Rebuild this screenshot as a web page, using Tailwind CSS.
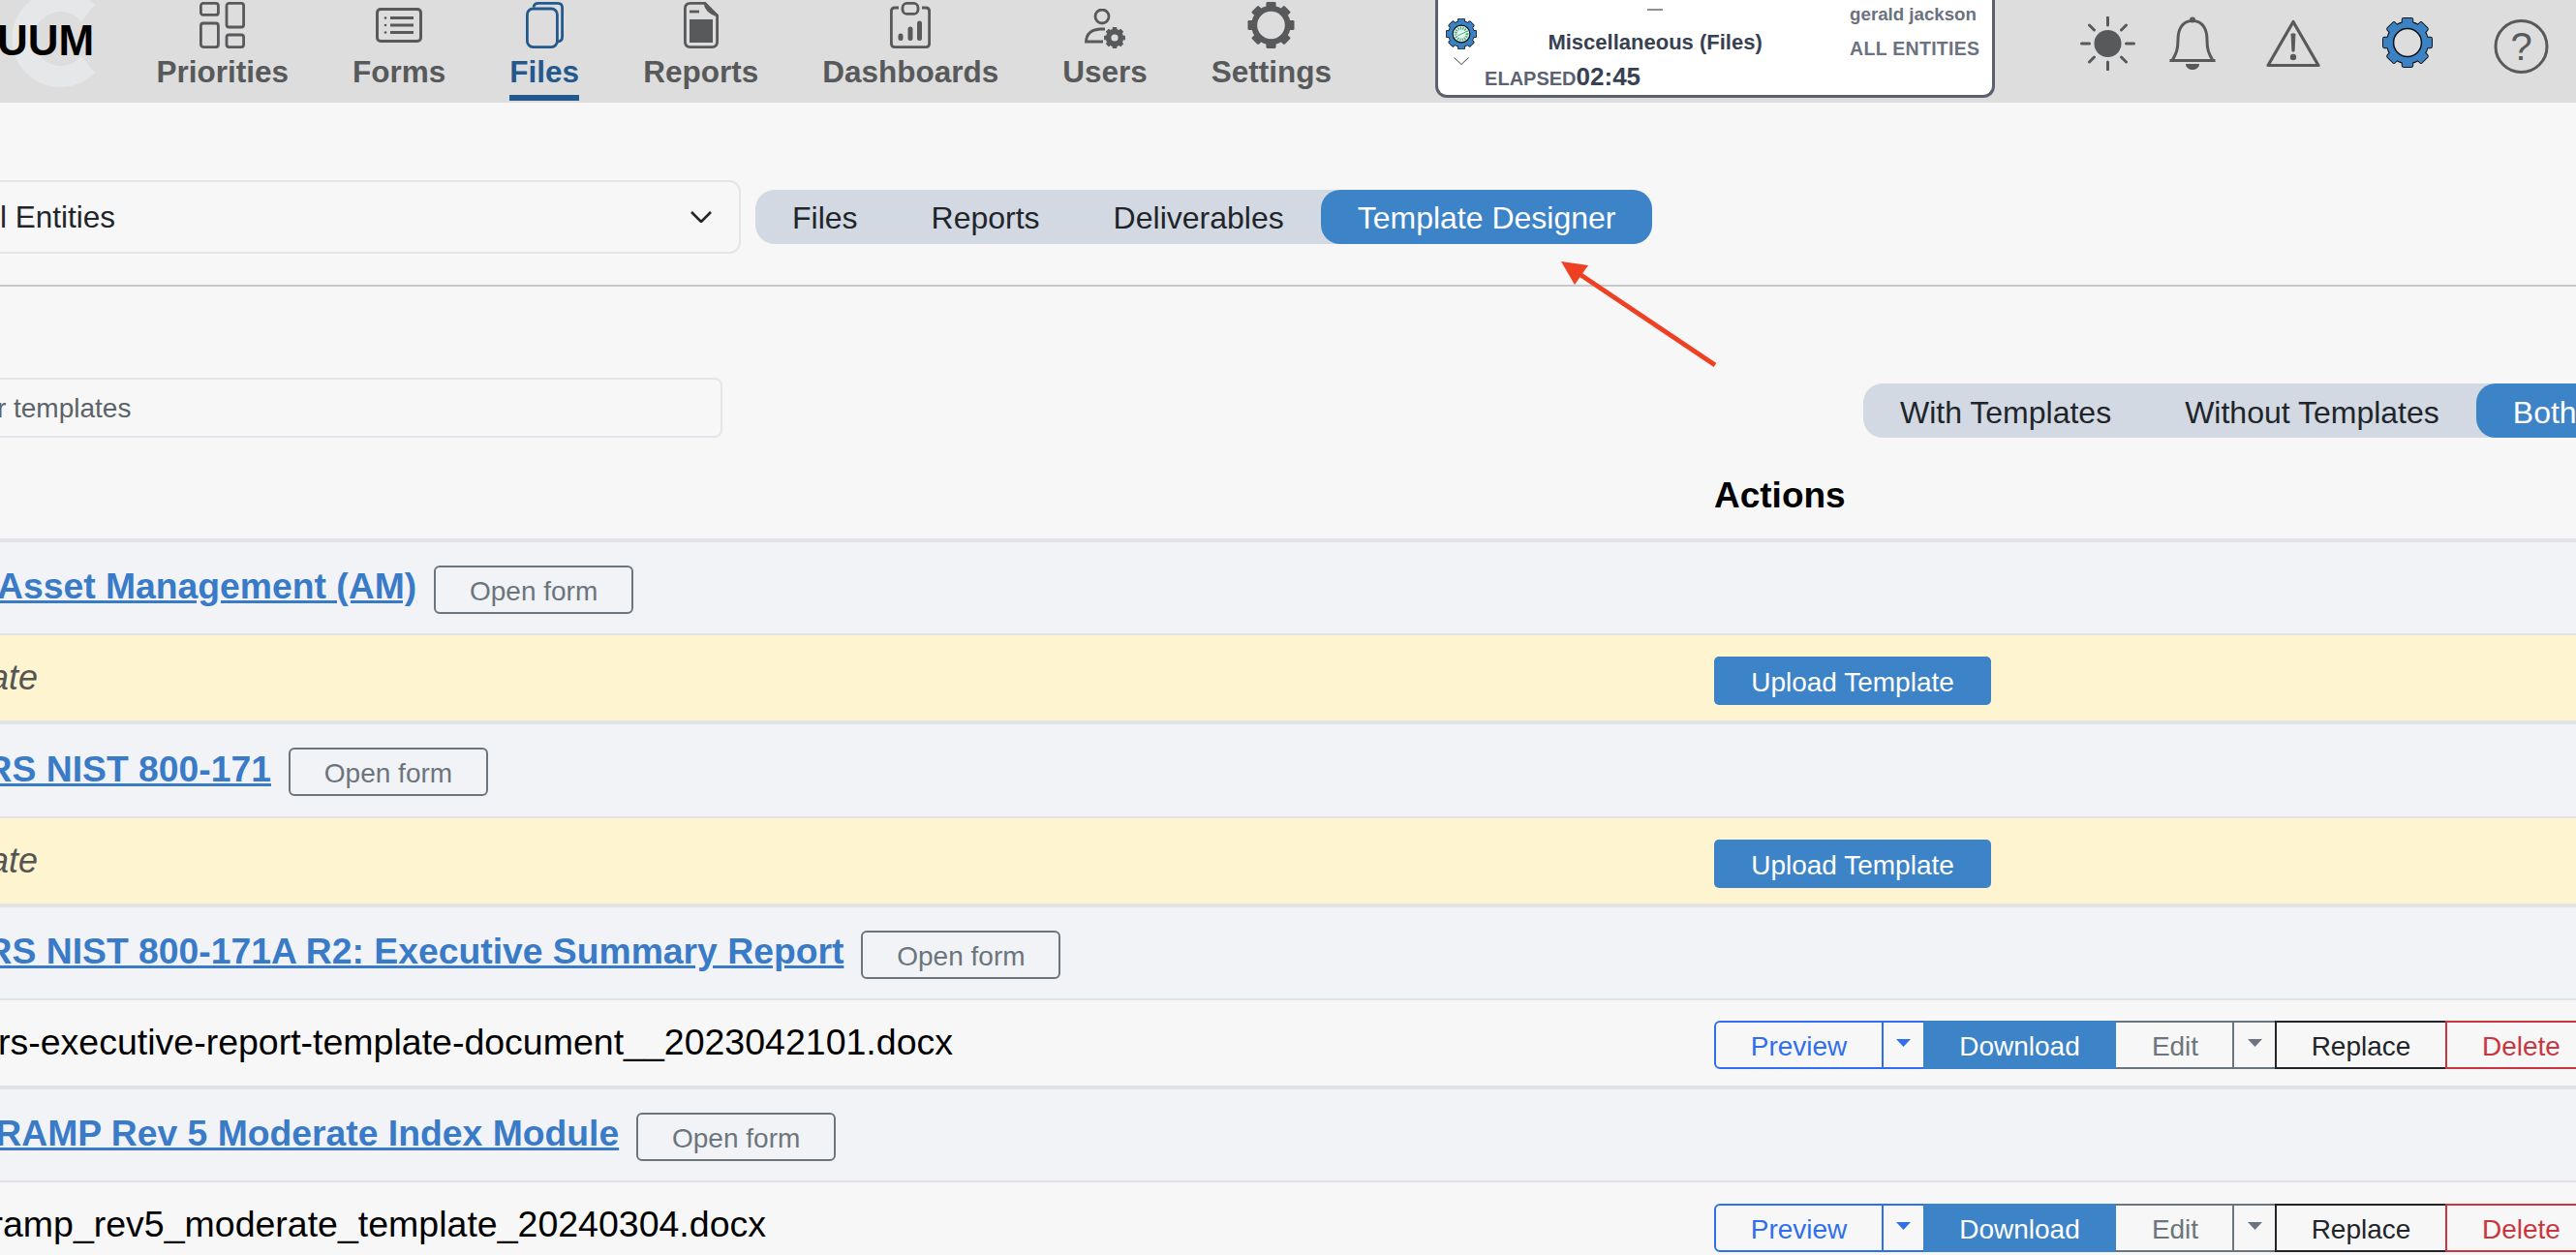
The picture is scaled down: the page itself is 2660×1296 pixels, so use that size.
<!DOCTYPE html>
<html lang="en">
<head>
<meta charset="utf-8">
<title>Template Designer</title>
<script src="https://cdn.jsdelivr.net/npm/@tailwindcss/browser@4"></script>
</head>
<body class="m-0">
<svg width="0" height="0" class="absolute">
  <defs>
    <g id="teeth">
      <rect x="-5.5" y="-26" width="11" height="52" rx="1.5"/>
      <rect x="-5.5" y="-26" width="11" height="52" rx="1.5" transform="rotate(45)"/>
      <rect x="-5.5" y="-26" width="11" height="52" rx="1.5" transform="rotate(90)"/>
      <rect x="-5.5" y="-26" width="11" height="52" rx="1.5" transform="rotate(135)"/>
      <circle r="22"/>
    </g>
  </defs>
</svg>
<div class="relative w-[2660px] h-[1296px] overflow-hidden bg-[#f7f7f7] font-['Liberation_Sans',Arial,sans-serif] text-[#212529]">

  <!-- top bar -->
  <header class="flex items-start h-[106px] bg-[#dddddd] overflow-hidden">
    <div class="relative w-[161.5px] h-[106px] shrink-0">
      <svg class="absolute left-0 top-0" width="110" height="106" viewBox="0 0 110 106"><path fill="#e6e7e9" d="M98,5 A50,50 0 1 0 98,75 L84,58 A 28,28 0 1 1 84,22 Z"/></svg>
      <span class="absolute left-[-3px] top-[18px] text-[44px] leading-[48px] font-bold text-black">UUM</span>
    </div>
    <nav class="flex gap-[66px] text-[31.5px] font-bold text-[#58595b] leading-[36px]">
      <a class="flex flex-col items-center">
        <span class="h-[52px] pt-[2px]"><svg width="47" height="48" viewBox="0 0 47 48" fill="none" stroke="#58595b" stroke-width="2.8"><rect x="1.4" y="1.4" width="18" height="12" rx="2.5"/><rect x="28" y="1.4" width="17.6" height="24.6" rx="2.5"/><rect x="1.4" y="22" width="18" height="24.6" rx="2.5"/><rect x="28" y="34" width="17.6" height="12.6" rx="2.5"/></svg></span>
        <span class="mt-[4px]">Priorities</span><span class="mt-[6px] h-[6px] w-full"></span>
      </a>
      <a class="flex flex-col items-center">
        <span class="h-[52px] pt-[8px]"><svg width="48" height="36" viewBox="0 0 48 36" fill="none" stroke="#58595b" stroke-width="3"><rect x="1.5" y="1.5" width="45" height="33" rx="3.5"/><path d="M15 10.5H39M15 18H39M15 25.5H39"/><circle cx="10" cy="10.5" r="1.3" fill="#58595b" stroke="none"/><circle cx="10" cy="18" r="1.3" fill="#58595b" stroke="none"/><circle cx="10" cy="25.5" r="1.3" fill="#58595b" stroke="none"/></svg></span>
        <span class="mt-[4px]">Forms</span><span class="mt-[6px] h-[6px] w-full"></span>
      </a>
      <a class="flex flex-col items-center text-[#23598c]">
        <span class="h-[52px] pt-[2px]"><svg width="39" height="48" viewBox="0 0 39 48" fill="none" stroke="#23598c" stroke-width="2.8"><rect x="1.4" y="7" width="31" height="39.6" rx="6"/><path d="M8 5.5Q8.5 1.4 13 1.4H33Q37.6 1.4 37.6 6V36Q37.6 40.5 33 41"/></svg></span>
        <span class="mt-[4px]">Files</span><span class="mt-[6px] h-[6px] w-full bg-[#23598c]"></span>
      </a>
      <a class="flex flex-col items-center">
        <span class="h-[52px] pt-[2px]"><svg width="36" height="48" viewBox="0 0 36 48" fill="none" stroke="#58595b" stroke-width="2.8"><path d="M7 1.4H22L34.6 14V41Q34.6 46.6 29 46.6H7Q1.4 46.6 1.4 41V7Q1.4 1.4 7 1.4Z"/><path d="M22 1.4Q23 10 34.6 14" fill="#58595b"/><path d="M6 10H16"/><rect x="6" y="18" width="24" height="24" fill="#58595b" stroke="none"/></svg></span>
        <span class="mt-[4px]">Reports</span><span class="mt-[6px] h-[6px] w-full"></span>
      </a>
      <a class="flex flex-col items-center">
        <span class="h-[52px] pt-[2px]"><svg width="42" height="48" viewBox="0 0 42 48" fill="none" stroke="#58595b" stroke-width="2.8"><rect x="13" y="1.4" width="16" height="11" rx="4.5"/><path d="M9 6H5Q1.4 6 1.4 9.5V43Q1.4 46.6 5 46.6H37Q40.6 46.6 40.6 43V9.5Q40.6 6 37 6H33"/><path stroke-width="5" stroke-linecap="round" d="M11 35V37.5M21 28V37.5M30.5 22V37.5"/></svg></span>
        <span class="mt-[4px]">Dashboards</span><span class="mt-[6px] h-[6px] w-full"></span>
      </a>
      <a class="flex flex-col items-center">
        <span class="h-[52px] pt-[9px]"><svg width="43" height="41" viewBox="0 0 43 41" fill="none" stroke="#58595b" stroke-width="2.8"><circle cx="18" cy="8" r="7"/><path d="M21 21H16Q2 22 1.5 34H19"/><g transform="translate(31 30) scale(.42)" fill="#58595b" stroke="none"><use href="#teeth"/></g><circle cx="31" cy="30" r="3.6" fill="#dddddd" stroke="none"/></svg></span>
        <span class="mt-[4px]">Users</span><span class="mt-[6px] h-[6px] w-full"></span>
      </a>
      <a class="flex flex-col items-center">
        <span class="h-[52px] pt-[2px]"><svg width="49" height="48" viewBox="-26 -26 52 52"><use href="#teeth" fill="#58595b"/><circle r="15.5" fill="#dddddd"/></svg></span>
        <span class="mt-[4px]">Settings</span><span class="mt-[6px] h-[6px] w-full"></span>
      </a>
    </nav>

    <!-- timer card -->
    <div class="ml-[107px] flex w-[578px] h-[101px] shrink-0 bg-white border-x-[3px] border-b-[3px] border-[#5b6070] rounded-b-[12px]">
      <div class="ml-[8px] w-[32px] pt-[19px] flex flex-col items-center">
        <svg width="32" height="32" viewBox="-27 -27 54 54"><use href="#teeth" fill="#3b82c4" stroke="#111111" stroke-width="2.5"/><use href="#teeth" fill="#3b82c4"/><circle r="15" fill="#e8f6ef" stroke="#111111" stroke-width="2"/><circle r="10" fill="none" stroke="#35ad78" stroke-width="5" stroke-dasharray="2 2"/><path d="M-6 3L7 -3" stroke="#35ad78" stroke-width="1.5"/></svg>
        <svg class="mt-[8px]" width="16" height="8" viewBox="0 0 16 8" fill="none" stroke="#374151" stroke-width="1"><path d="M.5 .5L8 7.5L15.5 .5"/></svg>
      </div>
      <div class="ml-[8px] w-[352px] flex flex-col">
        <div class="mt-[9px] h-[2px] w-[16px] self-center bg-[#8a8f9a]"></div>
        <div class="mt-[20px] text-center text-[22px] leading-[26px] font-bold text-[#374151]">Miscellaneous (Files)</div>
        <div class="mt-[7px] flex items-baseline font-bold leading-[30px]"><span class="text-[20px] text-[#5b6373]">ELAPSED</span><span class="text-[26px] text-[#374151]">02:45</span></div>
      </div>
      <div class="ml-[25px] flex flex-col font-bold text-[#6b7280] whitespace-nowrap">
        <span class="mt-[3px] text-[18.7px] leading-[24px]">gerald jackson</span>
        <span class="mt-[11px] text-[19.5px] leading-[24px] tracking-[.3px]">ALL ENTITIES</span>
      </div>
    </div>

    <!-- right icons -->
    <div class="flex items-start">
      <svg class="ml-[88px] mt-[17px]" width="57" height="56" viewBox="-28.5 -28 57 56" fill="none" stroke="#58595b" stroke-width="3" stroke-linecap="round"><circle r="14" fill="#58595b" stroke="none"/><path d="M0 -27V-19M0 19V27M-27 0H-19M19 0H27M-19 -19L-14 -14M19 -19L14 -14M-19 19L-14 14M19 19L14 14"/></svg>
      <svg class="ml-[35px] mt-[17px]" width="48" height="55" viewBox="0 0 48 55" fill="none" stroke="#58595b" stroke-width="3"><path d="M24 4.5C13 4.5 9 14 9 24C9 34 7.5 38 3 45.5H45C40.5 38 39 34 39 24C39 14 35 4.5 24 4.5Z"/><path d="M0.5 45.5H47.5"/><circle cx="24" cy="3.5" r="3" fill="#58595b" stroke="none"/><path d="M17 49H31C31 53 27 55 24 55C21 55 17 53 17 49Z" fill="#58595b" stroke="none"/></svg>
      <svg class="ml-[52px] mt-[20px]" width="56" height="50" viewBox="0 0 56 50" fill="none" stroke="#58595b" stroke-width="3.2" stroke-linejoin="round"><path d="M28 2.5L54 47.5H2Z"/><path d="M26 15H30L29 33H27Z" fill="#58595b" stroke-width="1"/><circle cx="28" cy="39" r="3.2" fill="#58595b" stroke="none"/></svg>
      <svg class="ml-[64px] mt-[18px]" width="52" height="52" viewBox="-27 -27 54 54"><use href="#teeth" fill="#111111" stroke="#111111" stroke-width="2"/><use href="#teeth" fill="#3b82c4"/><circle r="15" fill="#dddddd" stroke="#111111" stroke-width="1.6"/></svg>
      <svg class="ml-[63px] mt-[20px]" width="57" height="56" viewBox="0 0 57 56"><circle cx="28.5" cy="28" r="26.5" fill="none" stroke="#58595b" stroke-width="3"/><text x="28.5" y="42" text-anchor="middle" font-size="40" fill="#58595b" font-family="Liberation Sans, Arial, sans-serif">?</text></svg>
    </div>
  </header>

  <!-- entity select and page tabs -->
  <div class="flex items-start pt-[80px]">
    <div class="-ml-[60px] w-[825px] h-[76px] shrink-0 flex items-center justify-between pl-[30px] pr-[28px] border-2 border-[#e2e5e9] rounded-[12px] text-[31.5px]">
      <span class="pt-[2px]">All Entities</span>
      <svg width="22" height="12" viewBox="0 0 22 12" fill="none" stroke="#212529" stroke-width="2.6"><path d="M1 1L11 11L21 1"/></svg>
    </div>
    <div class="ml-[15px] mt-[10px] flex h-[56px] rounded-[20px] bg-[#d3d9e2] text-[32px]">
      <span class="flex items-center pt-[2px] px-[38px]">Files</span>
      <span class="flex items-center pt-[2px] px-[38px]">Reports</span>
      <span class="flex items-center pt-[2px] px-[38px]">Deliverables</span>
      <span class="flex items-center pt-[2px] px-[38px] rounded-[20px] bg-[#3c83c7] text-white">Template Designer</span>
    </div>
  </div>
  <div class="mt-[32px] h-[2px] bg-[#c9c9c9]"></div>

  <!-- filter row -->
  <div class="mt-[94px] flex items-start">
    <div class="-ml-[80px] w-[826px] h-[62px] shrink-0 flex items-center pl-[22px] pt-[2px] border-2 border-[#e2e5e9] rounded-[8px] text-[28px] text-[#5c636a]">Filter templates</div>
    <div class="ml-[1178px] mt-[6px] flex h-[56px] shrink-0 rounded-l-[20px] bg-[#d3d9e2] text-[32px]">
      <span class="flex items-center pt-[3px] px-[38px]">With Templates</span>
      <span class="flex items-center pt-[3px] px-[38px]">Without Templates</span>
      <span class="flex items-center pt-[3px] px-[38px] rounded-[20px] bg-[#3c83c7] text-white">Both</span>
    </div>
  </div>

  <!-- table -->
  <div class="flex h-[108px] border-b-4 border-[#e0e2e6]">
    <div class="ml-[1770px] mt-[38px] text-[37px] leading-[44px] font-bold text-black">Actions</div>
  </div>

  <div class="flex items-center gap-[18px] h-[96px] border-b-2 border-[#e0e2e8] bg-[#f1f3f7] pb-[2px]">
    <a class="-ml-[3px] text-[37.3px] font-bold text-[#3a7bc8] underline whitespace-nowrap">Asset Management (AM)</a>
    <span class="mt-[5px] flex items-center justify-center pt-[4px] w-[206px] h-[50px] border-2 border-[#6c757d] rounded-[6px] text-[28px] text-[#6c757d]">Open form</span>
  </div>
  <div class="flex items-start h-[92px] border-b-4 border-[#e0e2e6] bg-[#fef4d0]">
    <span class="-ml-[200px] w-[239px] shrink-0 pt-[22px] text-right text-[36px] leading-[44px] italic text-[#555555] whitespace-nowrap">No template</span>
    <span class="ml-[1731px] mt-[22px] flex items-center justify-center pt-[4px] w-[286px] h-[50px] rounded-[5px] bg-[#3c83c7] text-white text-[28px]">Upload Template</span>
  </div>

  <div class="flex items-center gap-[18px] h-[97px] border-b-2 border-[#e0e2e8] bg-[#f1f3f7] pb-[2px]">
    <a class="-ml-[89px] text-[37.3px] font-bold text-[#3a7bc8] underline whitespace-nowrap">DFARS NIST 800-171</a>
    <span class="mt-[5px] flex items-center justify-center pt-[4px] w-[206px] h-[50px] border-2 border-[#6c757d] rounded-[6px] text-[28px] text-[#6c757d]">Open form</span>
  </div>
  <div class="flex items-start h-[92px] border-b-4 border-[#e0e2e6] bg-[#fef4d0]">
    <span class="-ml-[200px] w-[239px] shrink-0 pt-[22px] text-right text-[36px] leading-[44px] italic text-[#555555] whitespace-nowrap">No template</span>
    <span class="ml-[1731px] mt-[22px] flex items-center justify-center pt-[4px] w-[286px] h-[50px] rounded-[5px] bg-[#3c83c7] text-white text-[28px]">Upload Template</span>
  </div>

  <div class="flex items-center gap-[18px] h-[96px] border-b-2 border-[#e0e2e8] bg-[#f1f3f7] pb-[2px]">
    <a class="-ml-[89px] text-[37.3px] font-bold text-[#3a7bc8] underline whitespace-nowrap">DFARS NIST 800-171A R2: Executive Summary Report</a>
    <span class="mt-[5px] flex items-center justify-center pt-[4px] w-[206px] h-[50px] border-2 border-[#6c757d] rounded-[6px] text-[28px] text-[#6c757d]">Open form</span>
  </div>
  <div class="flex items-start h-[92px] border-b-4 border-[#e0e2e6]">
    <span class="-ml-[200px] w-[1184px] shrink-0 pt-[21px] text-right text-[37.5px] leading-[44px] text-black whitespace-nowrap">dfars-executive-report-template-document__2023042101.docx</span>
    <div class="ml-[786px] mt-[21px] flex h-[50px] shrink-0 text-[28px]">
      <span class="flex items-center justify-center pt-[3px] w-[175px] border-2 border-[#2f6fed] rounded-l-[6px] text-[#2f6fed]">Preview</span>
      <span class="flex items-center justify-center w-[41px] border-y-2 border-r-0 border-[#2f6fed] pb-[4px]"><svg width="15" height="8" viewBox="0 0 15 8"><path d="M0 0H15L7.5 8Z" fill="#2f6fed"/></svg></span>
      <span class="flex items-center justify-center pt-[3px] w-[199px] bg-[#3c83c7] text-white">Download</span>
      <span class="flex items-center justify-center pt-[3px] pl-[2px] w-[122px] border-y-2 border-r-2 border-[#6c757d] text-[#6c757d]">Edit</span>
      <span class="flex items-center justify-center w-[42px] border-y-2 border-[#6c757d] pb-[4px]"><svg width="15" height="8" viewBox="0 0 15 8"><path d="M0 0H15L7.5 8Z" fill="#6c757d"/></svg></span>
      <span class="flex items-center justify-center pt-[3px] w-[176px] border-y-2 border-l-2 border-[#212529]">Replace</span>
      <span class="flex items-center pt-[3px] pl-[36px] w-[176px] border-y-2 border-l-2 border-[#c9363f] text-[#c9363f]">Delete</span>
    </div>
  </div>

  <div class="flex items-center gap-[18px] h-[96px] border-b-2 border-[#e0e2e8] bg-[#f1f3f7] pb-[2px]">
    <a class="-ml-[71px] text-[37.3px] font-bold text-[#3a7bc8] underline whitespace-nowrap">FedRAMP Rev 5 Moderate Index Module</a>
    <span class="mt-[5px] flex items-center justify-center pt-[4px] w-[206px] h-[50px] border-2 border-[#6c757d] rounded-[6px] text-[28px] text-[#6c757d]">Open form</span>
  </div>
  <div class="flex items-start h-[75px]">
    <span class="-ml-[200px] w-[991px] shrink-0 pt-[21px] text-right text-[37.5px] leading-[44px] text-black whitespace-nowrap">fedramp_rev5_moderate_template_20240304.docx</span>
    <div class="ml-[979px] mt-[22px] flex h-[50px] shrink-0 text-[28px]">
      <span class="flex items-center justify-center pt-[3px] w-[175px] border-2 border-[#2f6fed] rounded-l-[6px] text-[#2f6fed]">Preview</span>
      <span class="flex items-center justify-center w-[41px] border-y-2 border-r-0 border-[#2f6fed] pb-[4px]"><svg width="15" height="8" viewBox="0 0 15 8"><path d="M0 0H15L7.5 8Z" fill="#2f6fed"/></svg></span>
      <span class="flex items-center justify-center pt-[3px] w-[199px] bg-[#3c83c7] text-white">Download</span>
      <span class="flex items-center justify-center pt-[3px] pl-[2px] w-[122px] border-y-2 border-r-2 border-[#6c757d] text-[#6c757d]">Edit</span>
      <span class="flex items-center justify-center w-[42px] border-y-2 border-[#6c757d] pb-[4px]"><svg width="15" height="8" viewBox="0 0 15 8"><path d="M0 0H15L7.5 8Z" fill="#6c757d"/></svg></span>
      <span class="flex items-center justify-center pt-[3px] w-[176px] border-y-2 border-l-2 border-[#212529]">Replace</span>
      <span class="flex items-center pt-[3px] pl-[36px] w-[176px] border-y-2 border-l-2 border-[#c9363f] text-[#c9363f]">Delete</span>
    </div>
  </div>

  <!-- annotation arrow -->
  <svg class="absolute left-0 top-0 pointer-events-none" width="2660" height="1296" viewBox="0 0 2660 1296"><path d="M1771 377L1628 281" stroke="#ee4023" stroke-width="5"/><path d="M1612 270L1640 274L1626 294Z" fill="#ee4023"/></svg>
</div>
</body>
</html>
